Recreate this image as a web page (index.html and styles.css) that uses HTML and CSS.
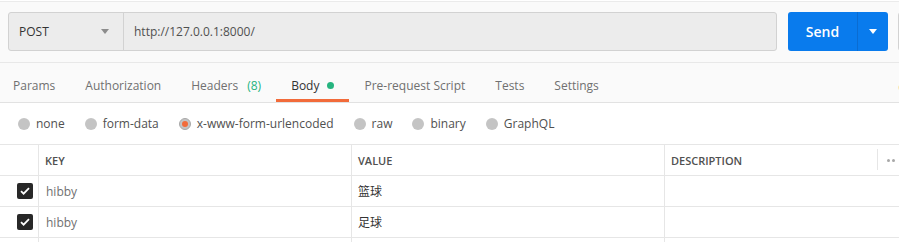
FILE: index.html
```html
<!DOCTYPE html>
<html lang="en">
<head>
	<meta charset="UTF-8">
	<title>Request</title>
	<link rel="stylesheet" href="styles.css">
</head>
<body>
	<div class="app">
		<div class="request-bar">
			<div class="url-group">
				<div class="method">
					<span>POST</span>
					<svg class="caret" width="8" height="5" viewBox="0 0 8 5"><path d="M0 0h8L4 5z" fill="#8c8c8c"/></svg>
				</div>
				<div class="url">http://127.0.0.1:8000/</div>
			</div>
			<div class="send">
				<span class="send-label">Send</span>
				<span class="send-more"><svg width="8" height="5" viewBox="0 0 8 5"><path d="M0 0h8L4 5z" fill="#fff"/></svg></span>
			</div>
			<div class="save"></div>
		</div>

		<div class="tabs">
			<span class="tab">Params</span>
			<span class="tab">Authorization</span>
			<span class="tab">Headers <em class="count">(8)</em></span>
			<span class="tab on">Body <i class="dot"></i></span>
			<span class="tab">Pre-request Script</span>
			<span class="tab">Tests</span>
			<span class="tab">Settings</span>
			<span class="cookies">Cookies</span>
		</div>

		<div class="body-types">
			<label class="radio"><i></i>none</label>
			<label class="radio"><i></i>form-data</label>
			<label class="radio checked"><i></i>x-www-form-urlencoded</label>
			<label class="radio"><i></i>raw</label>
			<label class="radio"><i></i>binary</label>
			<label class="radio"><i></i>GraphQL</label>
		</div>

		<div class="kv-table">
			<div class="kv-row head">
				<div class="cell"></div>
				<div class="cell">KEY</div>
				<div class="cell">VALUE</div>
				<div class="cell last">DESCRIPTION</div>
				<div class="cell more"><b></b><b></b></div>
			</div>
			<div class="kv-row">
				<div class="cell check"><span class="box"><svg width="10" height="8" viewBox="0 0 10 8"><path d="M1 4.2l2.6 2.5L9 1.2" stroke="#fff" stroke-width="1.8" fill="none"/></svg></span></div>
				<div class="cell key">hibby</div>
				<div class="cell">篮球</div>
				<div class="cell desc"></div>
			</div>
			<div class="kv-row">
				<div class="cell check"><span class="box"><svg width="10" height="8" viewBox="0 0 10 8"><path d="M1 4.2l2.6 2.5L9 1.2" stroke="#fff" stroke-width="1.8" fill="none"/></svg></span></div>
				<div class="cell key">hibby</div>
				<div class="cell">足球</div>
				<div class="cell desc"></div>
			</div>
			<div class="kv-row">
				<div class="cell"></div>
				<div class="cell"></div>
				<div class="cell"></div>
				<div class="cell desc"></div>
			</div>
		</div>
	</div>
</body>
</html>
```

FILE: styles.css
```css
body {
	margin: 0;
	background: #fff;
	overflow: hidden;
	font-family: "Open Sans", "Noto Sans CJK SC", sans-serif;
	font-size: 12px;
	color: #333;
}
.app {
	width: 960px;
	margin-top: 1px;
	border-top: 1px solid #ebebeb;
}

/* 地址栏 */
.request-bar {
	display: flex;
	padding: 10px 0 11px 8px;
	background: #fafafa;
}
.url-group {
	display: flex;
	flex-shrink: 0;
	width: 769px;
	height: 39px;
	box-sizing: border-box;
	border: 1px solid #d2d2d2;
	border-radius: 3px;
	background: #ececec;
}
.method {
	display: flex;
	align-items: center;
	justify-content: space-between;
	width: 115px;
	box-sizing: border-box;
	padding: 0 14px 0 10px;
	border-right: 1px solid #d2d2d2;
	color: #333;
}
.url {
	display: flex;
	align-items: center;
	padding-left: 10px;
	color: #505050;
}
.send {
	display: flex;
	flex-shrink: 0;
	width: 100px;
	height: 39px;
	margin-left: 11px;
	border-radius: 3px;
	background: #097bed;
	color: #fff;
}
.send-label {
	display: flex;
	align-items: center;
	justify-content: center;
	width: 69px;
	border-right: 1px solid #0a6cd2;
	font-size: 14px;
	font-weight: 600;
}
.send-more {
	display: flex;
	align-items: center;
	justify-content: center;
	flex: 1;
}
.save {
	flex-shrink: 0;
	width: 100px;
	height: 39px;
	box-sizing: border-box;
	margin-left: 10px;
	border: 1px solid #d2d2d2;
	border-radius: 3px;
	background: #f0f0f0;
}

/* 标签页 */
.tabs {
	display: flex;
	height: 41px;
	box-sizing: border-box;
	border-top: 1px solid #e8e8e8;
	border-bottom: 1px solid #e2e2e2;
	background: #fafafa;
}
.tab {
	display: flex;
	align-items: center;
	padding: 9px 15px 0;
	border-bottom: 3px solid transparent;
	color: #707070;
}
.tab:first-child {
	padding-left: 13px;
}
.tab.on {
	border-bottom-color: #f26b3a;
	color: #333;
}
.count {
	font-style: normal;
	color: #26b47f;
	margin-left: 9px;
}
.dot {
	width: 7px;
	height: 7px;
	margin-left: 8px;
	border-radius: 50%;
	background: #26b47f;
}
.cookies {
	display: flex;
	align-items: center;
	margin-left: auto;
	padding: 9px 18px 0 0;
	color: #f26b3a;
}

/* body 类型 */
.body-types {
	display: flex;
	align-items: center;
	height: 41px;
	padding-left: 18px;
	color: #505050;
}
.radio {
	display: flex;
	align-items: center;
	margin-right: 20px;
}
.radio i {
	display: flex;
	align-items: center;
	justify-content: center;
	width: 12px;
	height: 12px;
	margin-right: 6px;
	border-radius: 50%;
	background: #c4c4c4;
}
.radio.checked i {
	box-sizing: border-box;
	border: 1px solid #a8a8a8;
}
.radio.checked i::after {
	content: "";
	width: 6px;
	height: 6px;
	border-radius: 50%;
	background: #f26b3a;
}

/* 参数表格 */
.kv-table {
	border-top: 1px solid #e6e6e6;
}
.kv-row {
	display: grid;
	grid-template-columns: 39px 313px 313px 212px 1fr;
	height: 31px;
	box-sizing: border-box;
	border-bottom: 1px solid #e6e6e6;
}
.cell {
	display: flex;
	align-items: center;
	padding-left: 6px;
	border-right: 1px solid #e6e6e6;
}
.cell.last,
.cell.desc {
	border-right: none;
}
.cell.desc {
	grid-column: span 2;
}
.head .cell {
	font-size: 11px;
	font-weight: 600;
	color: #505050;
}
.head .more {
	position: relative;
	border-right: none;
	padding-left: 10px;
	gap: 2px;
}
.more::before {
	content: "";
	position: absolute;
	left: 0;
	top: 4px;
	bottom: 5px;
	border-left: 1px solid #e6e6e6;
}
.more b {
	width: 3px;
	height: 3px;
	border-radius: 50%;
	background: #a8a8a8;
}
.cell.check {
	padding-left: 17px;
}
.box {
	display: flex;
	align-items: center;
	justify-content: center;
	width: 16px;
	height: 16px;
	border-radius: 2px;
	background: #282828;
}
.cell.key {
	padding-left: 7px;
	color: #707070;
}
```
